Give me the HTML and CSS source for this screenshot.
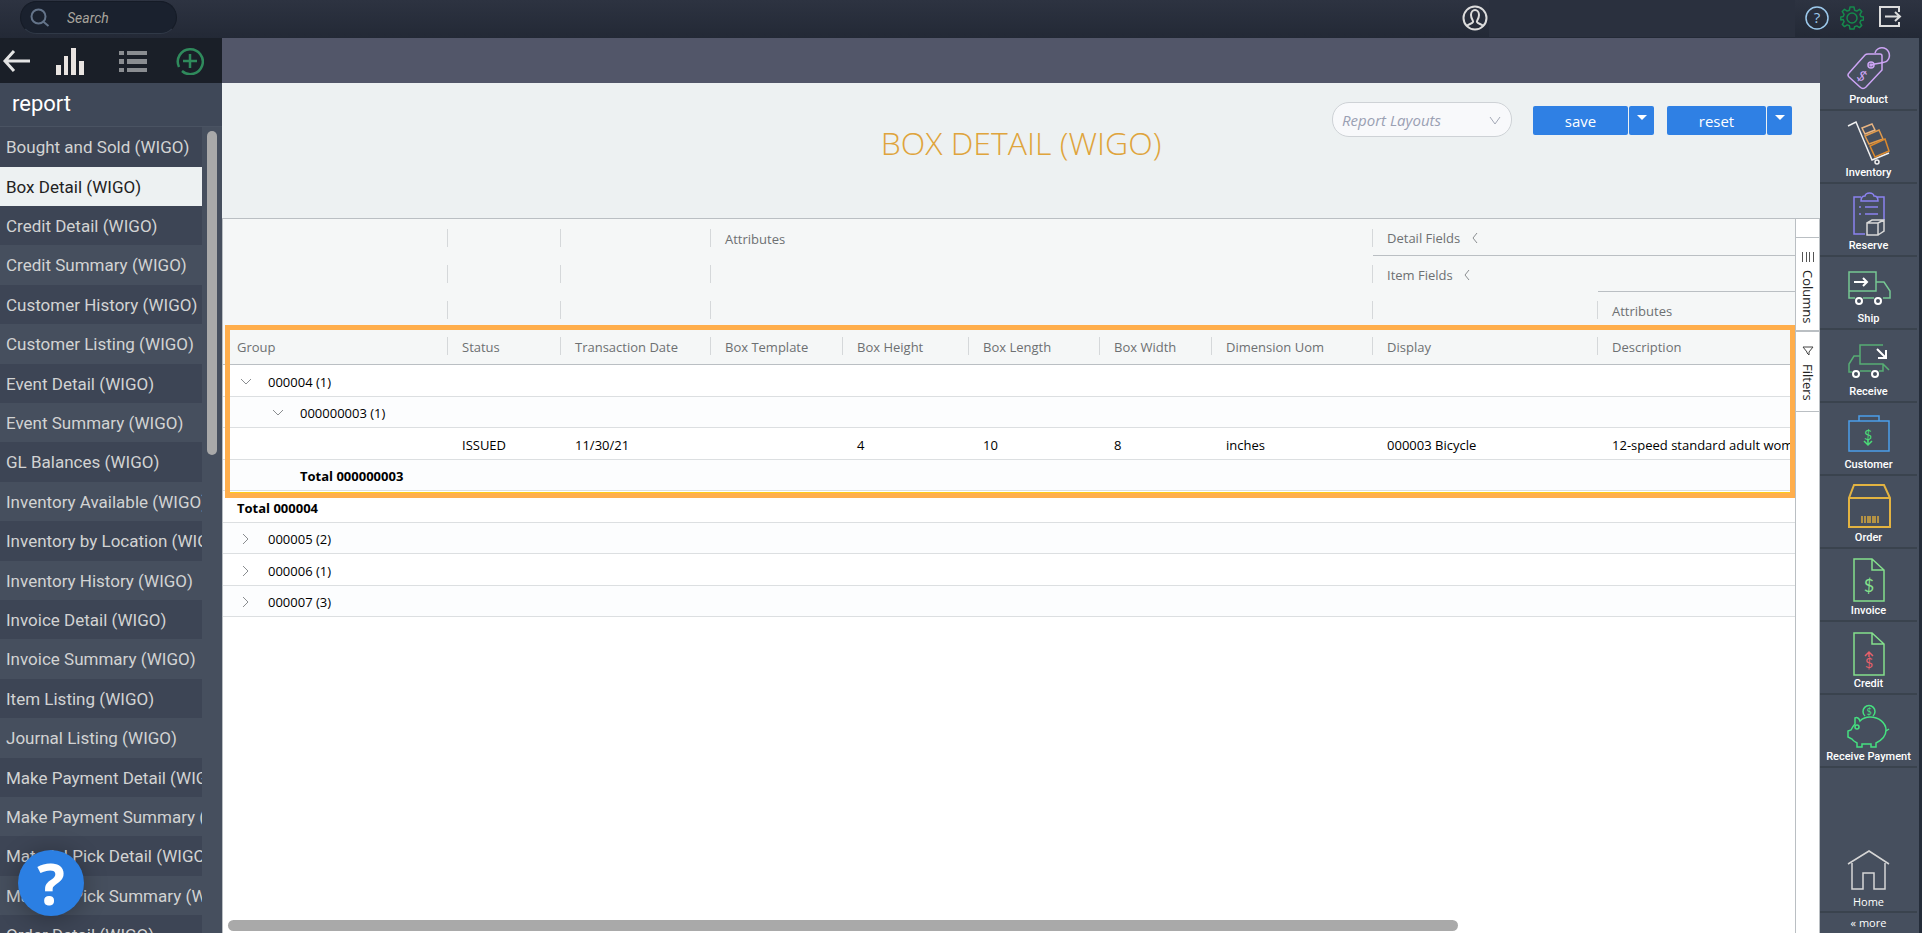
FILE: index.html
```html
<!DOCTYPE html>
<html lang="en">
<head>
    <meta charset="UTF-8">
    <meta name="viewport" content="width=device-width, initial-scale=1.0">
    <title>Box Detail (WIGO)</title>
    <link rel="stylesheet" href="styles.css">
</head>
<body>
    <header class="topbar">
        <label class="search">
            <svg width="20" height="20" viewBox="0 0 20 20" fill="none" stroke="#64748a" stroke-width="2">
                <circle cx="8.5" cy="8.5" r="7"/>
                <path d="M12.5 13l6 5"/>
            </svg>
            <input type="text" placeholder="Search" aria-label="Search">
        </label>
        <button class="icon-btn user-btn" aria-label="Account">
            <svg width="26" height="26" viewBox="0 0 26 26" fill="none" stroke="#dcdcdc" stroke-width="2">
                <circle cx="13" cy="13" r="11.5"/>
                <path d="M5 21c1-2 5-2 6-4 1-1-2-3-2-7 0-3 2-5 4-5s4 2 4 5c0 4-3 6-2 7 1 2 5 2 6 4"/>
            </svg>
        </button>
        <div class="topbar-message"></div>
        <nav class="tools">
            <button class="icon-btn" aria-label="Help">
                <svg width="24" height="24" viewBox="0 0 24 24">
                    <circle cx="12" cy="12" r="11" fill="none" stroke="#9cc9ec" stroke-width="1.5"/>
                    <text x="12" y="17" class="help-mark">?</text>
                </svg>
            </button>
            <button class="icon-btn" aria-label="Settings">
                <svg width="24" height="24" viewBox="0 0 24 24" fill="none" stroke="#158a4c" stroke-width="1.5" stroke-linejoin="round">
                    <circle cx="12" cy="12" r="5"/>
                    <path d="M10 1h4l.6 3.2 2.200.9L19.5 3.3l2.200 2.3-1.800 2.7.9 2.1 2.7.5v3l-2.700.6-.9 2.200 1.800 2.7-2.200 2.200-2.700-1.700-2.200.9L14 23h-4l-.6-3.200-2.200-.9-2.700 1.700-2.200-2.200 1.800-2.700-.9-2.200L.8 13.900v-3l2.500-.5.8-2.100-1.800-2.700 2.200-2.300 2.700 1.800 2.200-.9z"/>
                </svg>
            </button>
            <button class="icon-btn exit-btn" aria-label="Sign out">
                <svg width="24" height="24" viewBox="0 0 24 24" fill="none" stroke="#dcdcdc" stroke-width="2">
                    <path d="M21 6V1H2v19h19v-4M7 10.500h15M17 6l5 4.500-5 4.500"/>
                </svg>
            </button>
        </nav>
    </header>

    <div class="shell">
        <aside class="sidebar">
            <div class="sidebar-tools">
                <button class="icon-btn" aria-label="Back">
                    <svg width="28" height="28" viewBox="0 0 28 28" fill="none" stroke="#e4e4e4" stroke-width="3">
                        <path d="M12 4L3 14l9 10M3 14h25"/>
                    </svg>
                </button>
                <button class="icon-btn" aria-label="Charts">
                    <svg width="28" height="28" viewBox="0 0 28 28" fill="#e9e4e1">
                        <path d="M0 18h5v10H0zM8 9h4v19H8zM15 1h5v27h-5zM23 14h5v14h-5z"/>
                    </svg>
                </button>
                <button class="icon-btn list-btn" aria-label="List">
                    <svg width="28" height="28" viewBox="0 0 28 28" fill="#8a8d91">
                        <path d="M0 4h5v4H0zM8 4h20v4H8zM0 12h5v5H0zM8 12h20v5H8zM0 21h5v4H0zM8 21h20v4H8z"/>
                    </svg>
                </button>
                <button class="icon-btn" aria-label="Add">
                    <svg width="28" height="28" viewBox="0 0 28 28" fill="none" stroke="#2f8a5c" stroke-width="2.5">
                        <path d="M6 24A12.500 12.500 0 1 0 3 20M14 7v14M7 14h14"/>
                    </svg>
                </button>
            </div>
            <h2 class="sidebar-title">report</h2>
            <div class="report-scroll">
                <ul class="report-list">
                    <li><a href="#">Bought and Sold (WIGO)</a></li>
                    <li class="active"><a href="#">Box Detail (WIGO)</a></li>
                    <li><a href="#">Credit Detail (WIGO)</a></li>
                    <li><a href="#">Credit Summary (WIGO)</a></li>
                    <li><a href="#">Customer History (WIGO)</a></li>
                    <li><a href="#">Customer Listing (WIGO)</a></li>
                    <li><a href="#">Event Detail (WIGO)</a></li>
                    <li><a href="#">Event Summary (WIGO)</a></li>
                    <li><a href="#">GL Balances (WIGO)</a></li>
                    <li><a href="#">Inventory Available (WIGO)</a></li>
                    <li><a href="#">Inventory by Location (WIGO)</a></li>
                    <li><a href="#">Inventory History (WIGO)</a></li>
                    <li><a href="#">Invoice Detail (WIGO)</a></li>
                    <li><a href="#">Invoice Summary (WIGO)</a></li>
                    <li><a href="#">Item Listing (WIGO)</a></li>
                    <li><a href="#">Journal Listing (WIGO)</a></li>
                    <li><a href="#">Make Payment Detail (WIGO)</a></li>
                    <li><a href="#">Make Payment Summary (WIGO)</a></li>
                    <li><a href="#">Material Pick Detail (WIGO)</a></li>
                    <li><a href="#">Material Pick Summary (WIGO)</a></li>
                    <li><a href="#">Order Detail (WIGO)</a></li>
                </ul>
                <div class="scroll-track"><div class="scroll-thumb"></div></div>
            </div>
        </aside>

        <main class="main">
            <div class="band"></div>
            <div class="report-head">
                <h1>BOX DETAIL (WIGO)</h1>
                <div class="actions">
                    <div class="layout-picker">
                        <select aria-label="Report Layouts">
                            <option>Report Layouts</option>
                        </select>
                        <svg width="12" height="8" viewBox="0 0 12 8" fill="none" stroke="#a3a9b6">
                            <path d="M1 0l5 7 5-7"/>
                        </svg>
                    </div>
                    <div class="split-btn">
                        <button class="btn save">save</button>
                        <button class="btn caret" aria-label="Save options"></button>
                    </div>
                    <div class="split-btn">
                        <button class="btn reset">reset</button>
                        <button class="btn caret" aria-label="Reset options"></button>
                    </div>
                </div>
            </div>

            <div class="grid-area">
                <div class="grid">
                    <table class="report-table">
                        <colgroup>
                            <col class="w-group">
                            <col class="w-status">
                            <col class="w-date">
                            <col class="w-template">
                            <col class="w-height">
                            <col class="w-length">
                            <col class="w-width">
                            <col class="w-uom">
                            <col class="w-display">
                            <col class="w-desc">
                        </colgroup>
                        <thead>
                            <tr class="tall">
                                <th></th>
                                <th></th>
                                <th></th>
                                <th colspan="5">Attributes</th>
                                <th colspan="2" class="ruled">Detail Fields <svg class="fold" width="6" height="10" viewBox="0 0 6 10"><path d="M5 0L1 5l4 5"/></svg></th>
                            </tr>
                            <tr>
                                <th></th>
                                <th></th>
                                <th></th>
                                <th colspan="5"></th>
                                <th class="open">Item Fields <svg class="fold" width="6" height="10" viewBox="0 0 6 10"><path d="M5 0L1 5l4 5"/></svg></th>
                                <th class="ruled"></th>
                            </tr>
                            <tr>
                                <th></th>
                                <th></th>
                                <th></th>
                                <th colspan="5"></th>
                                <th></th>
                                <th>Attributes</th>
                            </tr>
                            <tr class="tall labels">
                                <th>Group</th>
                                <th>Status</th>
                                <th>Transaction Date</th>
                                <th>Box Template</th>
                                <th>Box Height</th>
                                <th>Box Length</th>
                                <th>Box Width</th>
                                <th>Dimension Uom</th>
                                <th>Display</th>
                                <th>Description</th>
                            </tr>
                        </thead>
                        <tbody>
                            <tr>
                                <td colspan="10"><svg class="chev" width="10" height="10" viewBox="0 0 10 10"><path d="M0 2l5 5 5-5"/></svg>000004 (1)</td>
                            </tr>
                            <tr>
                                <td colspan="10" class="level-1"><svg class="chev" width="10" height="10" viewBox="0 0 10 10"><path d="M0 2l5 5 5-5"/></svg>000000003 (1)</td>
                            </tr>
                            <tr>
                                <td></td>
                                <td>ISSUED</td>
                                <td>11/30/21</td>
                                <td></td>
                                <td>4</td>
                                <td>10</td>
                                <td>8</td>
                                <td>inches</td>
                                <td>000003 Bicycle</td>
                                <td>12-speed standard adult womens bike</td>
                            </tr>
                            <tr class="total">
                                <td colspan="10" class="level-2">Total 000000003</td>
                            </tr>
                            <tr class="total">
                                <td colspan="10">Total 000004</td>
                            </tr>
                            <tr>
                                <td colspan="10"><svg class="chev" width="10" height="10" viewBox="0 0 10 10"><path d="M2 0l5 5-5 5"/></svg>000005 (2)</td>
                            </tr>
                            <tr>
                                <td colspan="10"><svg class="chev" width="10" height="10" viewBox="0 0 10 10"><path d="M2 0l5 5-5 5"/></svg>000006 (1)</td>
                            </tr>
                            <tr>
                                <td colspan="10"><svg class="chev" width="10" height="10" viewBox="0 0 10 10"><path d="M2 0l5 5-5 5"/></svg>000007 (3)</td>
                            </tr>
                        </tbody>
                    </table>
                    <div class="h-track"><div class="h-thumb"></div></div>
                    <div class="highlight"></div>
                </div>
                <div class="side-tabs">
                    <button class="side-tab">
                        <svg width="12" height="10" viewBox="0 0 12 10" stroke="#555" stroke-width="1"><path d="M.5 0v10M4.500 0v10M7.500 0v10M11.500 0v10"/></svg>
                        Columns
                    </button>
                    <button class="side-tab filters">
                        <svg width="12" height="10" viewBox="0 0 12 10" fill="none" stroke="#444"><path d="M1 1h10L7 6v3L5 7V6z"/></svg>
                        Filters
                    </button>
                </div>
            </div>
        </main>

        <nav class="modules">
            <a href="#" class="module">
                <svg width="44" height="46" viewBox="0 0 44 46" stroke="#cda5f5">
                    <path d="M21 8l12 0q2 0 2 2v14L19 41q-3 3-6 0L2 31q-2-2 0-4L18 9q1-1 3-1z"/>
                    <path d="M28 7c1-4 5-6 9-5 6 2 7 9 3 13-2 2-8 2-16 4"/>
                    <circle cx="24" cy="19" r="3"/><circle cx="24" cy="19" r="1"/>
                    <text x="15" y="35" transform="rotate(35 15 30)" class="dollar" fill="#cda5f5">$</text>
                </svg>
                Product
            </a>
            <a href="#" class="module">
                <svg width="44" height="46" viewBox="0 0 44 46">
                    <path stroke="#f0f0f0" d="M1 7l8-4 16 38 17-7"/>
                    <circle cx="30" cy="43" r="2" stroke="#f0f0f0"/>
                    <path stroke="#e8b482" d="M15 9l10-4 3 6-10 4z"/>
                    <path stroke="#e09a4c" d="M18 17l14-6 4 9-14 5z"/>
                    <path stroke="#dc8a2e" d="M23 27l15-7 4 12-14 6z"/>
                </svg>
                Inventory
            </a>
            <a href="#" class="module">
                <svg width="44" height="46" viewBox="0 0 44 46">
                    <path stroke="#8b82f0" d="M14 5H7v37h11M30 5h7v23M14 9c0-4 2-5 4-5 1-4 8-4 9 0 2 0 4 1 4 5zM18 15h13M18 22h13M12 15h2M12 22h2"/>
                    <path stroke="#d8d8d8" d="M20 31h11v12H20zM20 31l5-3h12v11l-6 4M31 31l6-3"/>
                </svg>
                Reserve
            </a>
            <a href="#" class="module">
                <svg width="44" height="46" viewBox="0 0 44 46">
                    <path stroke="#76c893" d="M8 33H2V7h27v19H2M29 17h8l6 9v7h-7M16 33h11M29 17v9"/>
                    <path stroke="#fff" stroke-width="2" d="M7 17h13M16 13l4 4-4 4"/>
                    <circle cx="12" cy="36" r="3" stroke="#fff" stroke-width="2"/>
                    <circle cx="31" cy="36" r="3" stroke="#fff" stroke-width="2"/>
                </svg>
                Ship
            </a>
            <a href="#" class="module">
                <svg width="44" height="46" viewBox="0 0 44 46">
                    <path stroke="#57ad74" d="M36 7H13v19h23l6 6M13 18H7l-5 8v8h3M13 33h11M32 33h4v-7"/>
                    <path stroke="#fff" stroke-width="2" d="M30 11l9 9M39 12v8h-8"/>
                    <circle cx="9" cy="36" r="3" stroke="#fff" stroke-width="2"/>
                    <circle cx="28" cy="36" r="3" stroke="#fff" stroke-width="2"/>
                </svg>
                Receive
            </a>
            <a href="#" class="module">
                <svg width="44" height="46" viewBox="0 0 44 46">
                    <path stroke="#4b9fea" d="M2 10h40v30H2zM12 10V5h20v5"/>
                    <path stroke="#4bdc78" d="M21 29v5M17 30l4 4 4-4"/>
                    <text x="21" y="29" class="dollar" fill="#4bdc78">$</text>
                </svg>
                Customer
            </a>
            <a href="#" class="module">
                <svg width="44" height="46" viewBox="0 0 44 46">
                    <path stroke="#e3b341" stroke-width="2" d="M7 1h30l6 13v29H2V14zM2 14h41"/>
                    <path stroke="#d8a83c" d="M15 32v7M18 32v7M21 32v7M23 32v7M26 32v7M28 32v7M31 32v7"/>
                </svg>
                Order
            </a>
            <a href="#" class="module">
                <svg width="44" height="46" viewBox="0 0 44 46" stroke="#84e08c">
                    <path d="M7 2h18l12 11v31H7zM25 2v11h12"/>
                    <text x="22" y="35" class="dollar big" fill="#84e08c">$</text>
                </svg>
                Invoice
            </a>
            <a href="#" class="module">
                <svg width="44" height="46" viewBox="0 0 44 46">
                    <path stroke="#84e08c" d="M7 3h18l12 11v31H7zM25 3v11h12"/>
                    <path stroke="#e8606a" d="M22 27v-5M18 26l4-4 4 4"/>
                    <text x="22" y="38" class="dollar" fill="#e8606a">$</text>
                </svg>
                Credit
            </a>
            <a href="#" class="module">
                <svg width="44" height="46" viewBox="0 0 44 46" stroke="#45e080">
                    <path d="M18 13a6 6 0 1 1 8 0"/>
                    <text x="22" y="12" class="dollar small" fill="#45e080">$</text>
                    <path d="M13 18c-1-3-3-4-5-3v6c-2 2-3 4-4 6l-3 1v6l4 2c1 2 3 3 5 4v4h5v-3h9v3h5v-4c6-3 10-8 10-13 0-7-7-13-16-13-4 0-7 1-10 4zM39 28l3-2"/>
                    <circle cx="10" cy="24" r="2"/>
                </svg>
                Receive Payment
            </a>
            <div class="modules-gap"></div>
            <a href="#" class="module home">
                <svg width="44" height="46" viewBox="0 0 44 46" stroke="#d6d6d6">
                    <path d="M1 16L22 3l20 13M5 15v26h11V25h11v16h11V15"/>
                </svg>
                Home
            </a>
            <a href="#" class="more">« more</a>
        </nav>
    </div>

    <button class="help-bubble" aria-label="Open help">?</button>
</body>
</html>
```
FILE: styles.css
```css
* {
    box-sizing: border-box;
}
body {
    margin: 0;
    height: 100vh;
    display: flex;
    flex-direction: column;
    overflow: hidden;
    background: #242c39;
    font-family: Roboto, sans-serif;
}
a {
    color: inherit;
    text-decoration: none;
}
button {
    font-family: inherit;
    border: 0;
    padding: 0;
    cursor: pointer;
}
.icon-btn {
    display: flex;
    background: none;
}

/* top bar */
.topbar {
    flex: none;
    height: 38px;
    display: flex;
    align-items: flex-start;
    background: linear-gradient(#2d3341, #232936);
}
.search {
    display: flex;
    align-items: center;
    width: 157px;
    height: 33px;
    margin: 1px auto 0 20px;
    padding-left: 9px;
    border: 1px solid #151b26;
    border-bottom-color: #303947;
    border-radius: 17px;
    background: #1a212e;
}
.search input {
    width: 90px;
    margin-left: 17px;
    padding: 0;
    border: 0;
    outline: none;
    background: none;
    color: #fff;
    font: italic 14px Roboto, sans-serif;
}
.search input::placeholder {
    color: #a9a59d;
}
.user-btn {
    margin-top: 5px;
}
.topbar-message {
    width: 306px;
    height: 37px;
    margin-left: 1px;
    background: #2a303e;
}
.tools {
    display: flex;
    gap: 11px;
    width: 127px;
    padding: 6px 0 0 10px;
}
.exit-btn {
    margin-left: 3px;
}
.help-mark {
    fill: #9cc9ec;
    font: 15px "Open Sans", sans-serif;
    text-anchor: middle;
}

.shell {
    flex: 1;
    min-height: 0;
    display: flex;
    padding-right: 3px;
}

/* report list */
.sidebar {
    flex: none;
    width: 222px;
    display: flex;
    flex-direction: column;
    background: #464f5e;
}
.sidebar-tools {
    flex: none;
    height: 45px;
    display: flex;
    align-items: center;
    gap: 26px;
    padding-left: 2px;
    background: #1a1f28;
}
.list-btn {
    margin: 0 3px 0 9px;
}
.sidebar-title {
    flex: none;
    height: 44px;
    margin: 0;
    padding-left: 12px;
    border-bottom: 1px solid #4a5362;
    background: #3f4858;
    color: #fff;
    font-size: 22px;
    font-weight: 400;
    line-height: 42px;
}
.report-scroll {
    flex: 1;
    min-height: 0;
    display: flex;
    overflow: hidden;
}
.report-list {
    width: 202px;
    margin: 0;
    padding: 0;
    list-style: none;
}
.report-list li {
    height: 39px;
    padding-left: 6px;
    overflow: hidden;
    color: #d2d3d3;
    font-size: 17px;
    line-height: 40px;
    white-space: nowrap;
}
.report-list li:nth-child(5n+1),
.report-list li:nth-child(5n+4) {
    height: 40px;
}
.report-list li:nth-child(odd) {
    background: #3d4555;
}
.report-list li.active {
    background: #edf1f2;
    color: #222;
}
.scroll-track {
    width: 20px;
    padding: 4px 5px;
}
.scroll-thumb {
    height: 324px;
    border-radius: 5px;
    background: #a9a9a9;
}

/* report header */
.main {
    flex: 1;
    min-width: 0;
    display: flex;
    flex-direction: column;
    background: #fff;
    font-family: "Open Sans", "Noto Sans", sans-serif;
}
.band {
    flex: none;
    height: 45px;
    background: #525669;
}
.report-head {
    flex: none;
    height: 135px;
    display: grid;
    grid-template-columns: 1fr auto 1fr;
    background: #edf1f2;
}
.report-head h1 {
    grid-column: 2;
    margin: 36px 0 0;
    color: #dfa43c;
    font-size: 32px;
    font-weight: 300;
    line-height: 48px;
}
.actions {
    display: flex;
    align-items: flex-start;
    justify-self: end;
    padding: 19px 28px 0 0;
}
.layout-picker {
    position: relative;
    margin-right: 21px;
}
.layout-picker select {
    width: 180px;
    height: 35px;
    padding: 0 9px;
    appearance: none;
    border: 1px solid #ced2d6;
    border-radius: 17px;
    background: #f8f9fb;
    color: #9aa0b3;
    font: italic 15px "Open Sans", sans-serif;
}
.layout-picker svg {
    position: absolute;
    right: 11px;
    top: 15px;
}
.split-btn {
    display: flex;
    gap: 1px;
    margin-top: 4px;
}
.split-btn + .split-btn {
    margin-left: 13px;
}
.btn {
    height: 29px;
    border-radius: 2px;
    background: #2f80e4;
    color: #fff;
    font-size: 15px;
    line-height: 31px;
}
.save {
    width: 95px;
}
.reset {
    width: 99px;
}
.caret {
    width: 25px;
}
.caret::after {
    content: "";
    display: block;
    width: 0;
    margin: -6px auto 0;
    border: 5px solid transparent;
    border-top-color: #fff;
    border-bottom: 0;
}

/* grid */
.grid-area {
    flex: 1;
    min-height: 0;
    display: flex;
    border-top: 1px solid #babfc3;
}
.grid {
    position: relative;
    flex: 1;
    min-width: 0;
    display: flex;
    flex-direction: column;
    justify-content: space-between;
    border-left: 1px solid #babfc3;
}
.report-table {
    width: 100%;
    table-layout: fixed;
    border-collapse: separate;
    border-spacing: 0;
    font-size: 13px;
}
.w-group { width: 225px; }
.w-status { width: 113px; }
.w-date { width: 150px; }
.w-template { width: 132px; }
.w-height { width: 126px; }
.w-length { width: 131px; }
.w-width { width: 112px; }
.w-uom { width: 161px; }
.w-display { width: 225px; }
.report-table th {
    height: 36px;
    padding: 2px 14px 0;
    background: #f5f7f7 linear-gradient(#d5d8da, #d5d8da) no-repeat right center / 1px 18px;
    color: #6d7072;
    font-weight: 400;
    text-align: left;
    white-space: nowrap;
}
.report-table .tall th {
    height: 37px;
}
.report-table th:last-child,
.report-table th.open {
    background: #f5f7f7;
}
.report-table th.ruled,
.report-table .labels th {
    border-bottom: 1px solid #babfc3;
}
.fold {
    margin-left: 8px;
    fill: none;
    stroke: #8a8d90;
}
.report-table td {
    height: 32px;
    padding: 2px 14px 0;
    border-bottom: 1px solid #dcdfe1;
    overflow: hidden;
    color: #000;
    white-space: nowrap;
}
.report-table td:last-child {
    padding-right: 0;
}
.report-table tbody tr:nth-child(even) td {
    height: 31px;
    background: #fcfdfe;
}
.report-table td.level-1 {
    padding-left: 46px;
}
.report-table td.level-2 {
    padding-left: 77px;
}
.total {
    font-weight: 700;
}
.chev {
    margin: 0 17px 0 4px;
    fill: none;
    stroke: #8a8d90;
}
.highlight {
    position: absolute;
    top: 106px;
    left: 2px;
    right: 0;
    height: 173px;
    border: 5px solid #ffae4c;
    box-shadow: inset 0 -1px 0 #ffcc1a;
    pointer-events: none;
}
.h-track {
    padding: 0 10px 2px 5px;
}
.h-thumb {
    width: 79%;
    height: 11px;
    border-radius: 6px;
    background: #a9a9a9;
}

/* columns / filters tabs */
.side-tabs {
    flex: none;
    width: 25px;
    padding-top: 18px;
    border: solid #babfc3;
    border-width: 0 1px;
}
.side-tab {
    display: flex;
    align-items: center;
    gap: 8px;
    width: 23px;
    height: 94px;
    padding-top: 14px;
    border: solid #babfc3;
    border-width: 1px 0;
    background: none;
    color: #222;
    font-size: 13px;
    writing-mode: vertical-rl;
}
.side-tab.filters {
    height: 81px;
}

/* module menu */
.modules {
    flex: none;
    width: 99px;
    display: flex;
    flex-direction: column;
    padding-right: 2px;
    background: #464f5e;
    color: #fff;
}
.module {
    flex: none;
    height: 73px;
    display: flex;
    flex-direction: column;
    align-items: center;
    padding-top: 8px;
    border-bottom: 2px solid #3a434e;
    font-size: 11px;
    font-weight: 500;
    line-height: 15px;
    white-space: nowrap;
}
.module svg {
    flex: none;
    fill: none;
    stroke-width: 1.5;
}
.dollar {
    font: 14px Lato, sans-serif;
    text-anchor: middle;
    stroke: none;
}
.dollar.big {
    font-size: 18px;
}
.dollar.small {
    font-size: 9px;
}
.modules-gap {
    flex: 1;
}
.home,
.more {
    font-family: "Open Sans", sans-serif;
    font-size: 11px;
}
.more {
    flex: none;
    height: 20px;
    font-weight: 500;
    line-height: 20px;
    text-align: center;
}

.help-bubble {
    position: fixed;
    left: 18px;
    bottom: 17px;
    width: 66px;
    height: 66px;
    border-radius: 50%;
    background: #2b7fe3;
    box-shadow: 0 2px 24px rgba(0, 0, 0, 0.3);
    color: #fff;
    font: 700 58px/66px "Open Sans", sans-serif;
}
```
